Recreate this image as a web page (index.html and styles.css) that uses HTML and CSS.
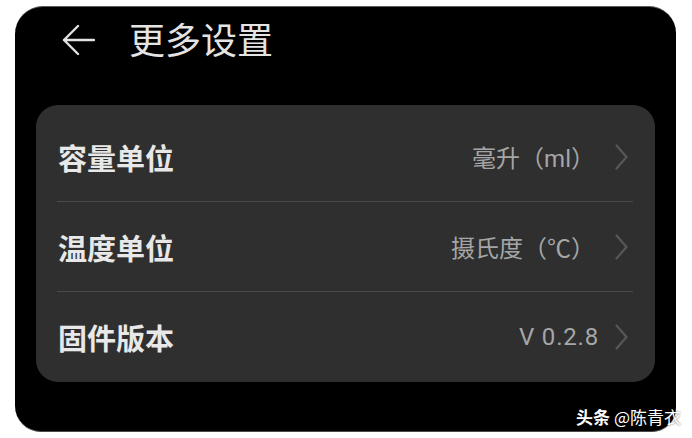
FILE: index.html
```html
<!DOCTYPE html>
<html lang="zh-CN">
<head>
<meta charset="utf-8">
<title>更多设置</title>
<link rel="stylesheet" href="styles.css">
</head>
<body>
<div class="screen">
  <header class="topbar">
    <svg class="back" width="34" height="32" viewBox="0 0 34 32" aria-hidden="true">
      <path d="M33 16 H3 M17 2 L3 16 L17 30" fill="none" stroke="#e2e2e2" stroke-width="2.4" stroke-linecap="round" stroke-linejoin="round"/>
    </svg>
    <h1 class="title">更多设置</h1>
  </header>
  <section class="card">
    <div class="row">
      <span class="label">容量单位</span>
      <span class="value">毫升（ml）</span>
      <svg class="chev" width="13" height="26" viewBox="0 0 13 26" aria-hidden="true"><path d="M1.5 1.5 L11.5 13 L1.5 24.5" fill="none" stroke="#575757" stroke-width="2.2" stroke-linecap="round" stroke-linejoin="round"/></svg>
    </div>
    <div class="divider"></div>
    <div class="row">
      <span class="label">温度单位</span>
      <span class="value">摄氏度（℃）</span>
      <svg class="chev" width="13" height="26" viewBox="0 0 13 26" aria-hidden="true"><path d="M1.5 1.5 L11.5 13 L1.5 24.5" fill="none" stroke="#575757" stroke-width="2.2" stroke-linecap="round" stroke-linejoin="round"/></svg>
    </div>
    <div class="divider"></div>
    <div class="row">
      <span class="label">固件版本</span>
      <span class="value latin">V 0.2.8</span>
      <svg class="chev" width="13" height="26" viewBox="0 0 13 26" aria-hidden="true"><path d="M1.5 1.5 L11.5 13 L1.5 24.5" fill="none" stroke="#575757" stroke-width="2.2" stroke-linecap="round" stroke-linejoin="round"/></svg>
    </div>
  </section>
</div>
<div class="watermark"><b>头条</b> @陈青衣</div>
</body>
</html>
```
FILE: styles.css
```css
html, body {
  margin: 0;
  padding: 0;
  background: #ffffff;
}
body {
  width: 692px;
  height: 438px;
  position: relative;
  overflow: hidden;
  font-family: "Roboto", "Noto Sans CJK SC", sans-serif;
}
.screen {
  box-sizing: border-box;
  margin: 6px 16px 0 15px;
  height: 426px;
  background: #000;
  border-radius: 28px 27px 24px 26px;
  border-top: 1px solid #5a5a5a;
  border-bottom: 1px solid #4a4a4a;
  padding: 0 21px 0 21px;
}
.topbar {
  height: 63px;
  display: flex;
  align-items: center;
  padding-left: 25px;
}
.back {
  display: block;
  margin-top: 2px;
}
.title {
  margin: 0 0 0 34px;
  font-family: "Noto Sans CJK SC", sans-serif;
  font-weight: 400;
  font-size: 36px;
  color: #e4e4e4;
  line-height: 1.2;
  letter-spacing: 0;
}
.card {
  margin-top: 35px;
  background: #2f2f2f;
  border-radius: 22px;
  padding: 7px 0 1px 0;
}
.row {
  height: 89px;
  display: flex;
  align-items: center;
  padding: 0 27px 0 22px;
}
.label {
  font-family: "Noto Sans CJK SC", sans-serif;
  font-weight: 700;
  font-size: 29px;
  color: #e8e8e8;
  flex: 1;
}
.value {
  font-family: "Roboto", "Noto Sans CJK SC", sans-serif;
  font-size: 24px;
  color: #a6a6a6;
  margin-right: 20px;
}
.value.latin {
  letter-spacing: 0.8px;
  margin-right: 16px;
}
.chev {
  display: block;
}
.divider {
  height: 1px;
  background: #4a4a4a;
  margin: 0 22px 0 21px;
}
.watermark {
  position: absolute;
  right: 11px;
  bottom: 9px;
  font-family: "Noto Sans CJK SC", sans-serif;
  font-size: 17px;
  color: #ffffff;
  text-shadow: 0 0 2px rgba(0,0,0,0.7);
  white-space: nowrap;
}
.watermark b {
  font-weight: 700;
}
```
